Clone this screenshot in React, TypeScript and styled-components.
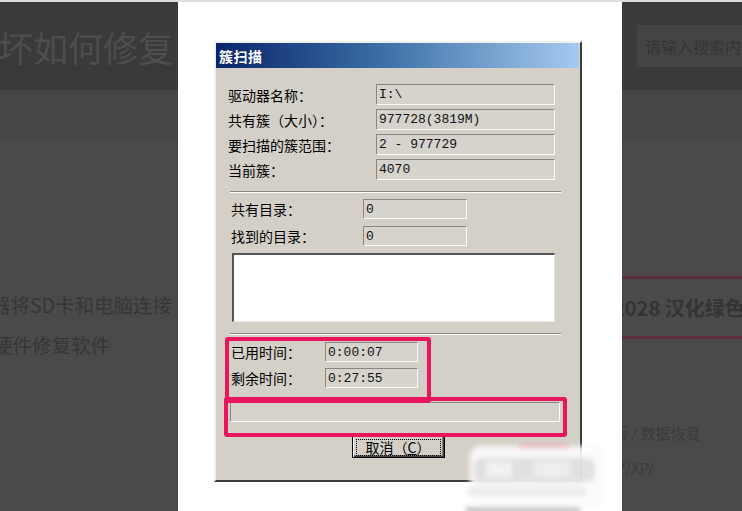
import React from "react";
import styled, { createGlobalStyle } from "styled-components";

/* ─── Page shell ─────────────────────────────────────── */
const GlobalStyle = createGlobalStyle`
  html, body { margin: 0; padding: 0; }
  body {
    width: 742px;
    height: 511px;
    overflow: hidden;
    background: #4a4a4a;
    font-family: "Noto Sans CJK SC", "Noto Sans", sans-serif;
  }
`;

const Screen = styled.div`
  width: 742px;
  height: 511px;
  display: flex;
  flex-direction: column;
  overflow: hidden;
`;

const TopStrip = styled.div`
  height: 2px;
  flex: none;
  background: #dedede;
`;

const Stage = styled.div`
  flex: 1;
  display: flex;
  min-height: 0;
`;

const SidePane = styled.div<{ $w: number }>`
  width: ${(p) => p.$w}px;
  flex: none;
  display: flex;
  flex-direction: column;
  overflow: hidden;
  background: #4a4a4a;
`;

const Header = styled.div`
  height: 88px;
  flex: none;
  display: flex;
  align-items: center;
  background: #3a3a3a;
  overflow: hidden;
`;

const NavBand = styled.div`
  height: 50px;
  flex: none;
  background: #464646;
`;

const PageTitle = styled.h1`
  margin: 0 0 0 -37px;
  font-size: 35px;
  font-weight: 400;
  color: #4d4d4d;
  white-space: nowrap;
`;

const SearchBox = styled.div`
  margin-left: 15px;
  height: 42px;
  width: 140px;
  flex: none;
  background: #444444;
  display: flex;
  align-items: center;
  padding-left: 8px;
  font-size: 16px;
  color: #343434;
  white-space: nowrap;
`;

const LeftBody = styled.div`
  padding-top: 145px;
`;

const BodyLine = styled.p<{ $shift: number }>`
  margin: 0 0 0 ${(p) => p.$shift}px;
  line-height: 40px;
  font-size: 19.5px;
  color: #363636;
  white-space: nowrap;
`;

const RightBody = styled.div`
  padding-top: 136px;
`;

const DimRule = styled.div`
  height: 3px;
  background: #5a2f3a;
`;

const CardTitle = styled.div`
  height: 57px;
  display: flex;
  align-items: center;
  margin-left: -9px;
  font-size: 20px;
  font-weight: 700;
  color: #343434;
  white-space: nowrap;
`;

const SmallLink = styled.div<{ $mt: number; $shift: number }>`
  margin: ${(p) => p.$mt}px 0 0 ${(p) => p.$shift}px;
  line-height: 35px;
  font-size: 15px;
  color: #3a3a3a;
  white-space: nowrap;
`;

/* ─── Lightbox with the Windows dialog ───────────────── */
const Modal = styled.div`
  width: 444px;
  flex: none;
  box-sizing: border-box;
  background: #ffffff;
  position: relative;
  padding: 39px 0 0 36px;
`;

const Dialog = styled.div`
  position: relative;
  width: 368px;
  height: 441px;
  box-sizing: border-box;
  border: 2px solid;
  border-color: #f0f0f0 #3c3c3c #3c3c3c #f0f0f0;
  background: #d4d0c8;
  font-family: "Noto Sans CJK SC", sans-serif;
  color: #000;
`;

const TitleBar = styled.div`
  height: 25px;
  margin-right: 1px;
  display: flex;
  align-items: center;
  padding-left: 3px;
  background: linear-gradient(90deg, #0a246a 0%, #3a6ea5 45%, #a6caf0 100%);
  color: #fff;
  font-size: 14px;
  font-weight: 700;
  letter-spacing: 0.5px;
`;

const FieldGrid = styled.div<{ $cols: string; $gap: number; $pl: number; $mt: number }>`
  display: grid;
  grid-template-columns: ${(p) => p.$cols};
  row-gap: ${(p) => p.$gap}px;
  padding-left: ${(p) => p.$pl}px;
  margin-top: ${(p) => p.$mt}px;
  align-items: center;
`;

const Label = styled.span`
  font-size: 14px;
  line-height: 20px;
  white-space: nowrap;
`;

const Field = styled.div<{ $h: number }>`
  height: ${(p) => p.$h}px;
  box-sizing: border-box;
  border-top: 1px solid #8a8782;
  border-left: 1px solid #8a8782;
  border-right: 1px solid #fafafa;
  border-bottom: 1px solid #fafafa;
  background: #d6d3cd;
  padding-left: 2px;
  display: flex;
  align-items: center;
  font-family: "Liberation Mono", "DejaVu Sans Mono", monospace;
  font-size: 13px;
  color: #111;
  white-space: nowrap;
`;

const Separator = styled.div<{ $mt: number }>`
  margin: ${(p) => p.$mt}px 0 0 14px;
  width: 331px;
  border-top: 1px solid #8a8782;
  border-bottom: 1px solid #ffffff;
`;

const ListBox = styled.div`
  margin: 7px 0 0 16px;
  width: 323px;
  height: 69px;
  box-sizing: border-box;
  background: #ffffff;
  border-top: 2px solid #555;
  border-left: 2px solid #555;
  border-right: 1px solid #e8e8e8;
  border-bottom: 1px solid #e8e8e8;
`;

const ProgressTrack = styled.div`
  margin: 14px 0 0 14px;
  width: 330px;
  height: 20px;
  box-sizing: border-box;
  background: #d6d3cd;
  border-top: 1px solid #8a8782;
  border-left: 1px solid #8a8782;
  border-right: 1px solid #fafafa;
  border-bottom: 1px solid #fafafa;
`;

const CancelButton = styled.button`
  display: block;
  margin: 13px auto 0;
  width: 93px;
  height: 23px;
  padding: 0;
  border: 1px solid #000;
  background: #d4d0c8;
  box-shadow: inset 1px 1px #ffffff, inset -1px -1px #404040, inset -2px -2px #808080;
  font-family: "Noto Sans CJK SC", sans-serif;
  font-size: 14px;
  color: #000;
`;

const FocusRing = styled.span`
  display: flex;
  align-items: center;
  justify-content: center;
  margin: 3px;
  height: 15px;
  border: 1px dotted #000;
  line-height: 15px;
  u { text-decoration: underline; }
`;

const Highlight = styled.div<{ $l: number; $t: number; $w: number; $h: number }>`
  position: absolute;
  left: ${(p) => p.$l}px;
  top: ${(p) => p.$t}px;
  width: ${(p) => p.$w}px;
  height: ${(p) => p.$h}px;
  box-sizing: border-box;
  border: 4px solid #e8175d;
  border-radius: 3px;
  pointer-events: none;
`;

const Watermark = styled.svg`
  position: absolute;
  left: 284px;
  top: 432px;
  pointer-events: none;
`;

export default function App() {
  return (
    <>
      <GlobalStyle />
      <Screen>
        <TopStrip />
        <Stage>
          <SidePane $w={178}>
            <Header>
              <PageTitle>损坏如何修复</PageTitle>
            </Header>
            <NavBand />
            <LeftBody>
              <BodyLine $shift={-9}>器将SD卡和电脑连接</BodyLine>
              <BodyLine $shift={-7}>硬件修复软件</BodyLine>
            </LeftBody>
          </SidePane>

          <Modal>
            <Dialog>
              <TitleBar>簇扫描</TitleBar>

              <FieldGrid $cols="148px 179px" $gap={4} $pl={12} $mt={16}>
                <Label>驱动器名称：</Label>
                <Field $h={21}>I:\</Field>
                <Label>共有簇（大小）：</Label>
                <Field $h={21}>977728(3819M)</Field>
                <Label>要扫描的簇范围：</Label>
                <Field $h={21}>2 - 977729</Field>
                <Label>当前簇：</Label>
                <Field $h={21}>4070</Field>
              </FieldGrid>

              <Separator $mt={11} />

              <FieldGrid $cols="132px 104px" $gap={7} $pl={15} $mt={6}>
                <Label>共有目录：</Label>
                <Field $h={20}>0</Field>
                <Label>找到的目录：</Label>
                <Field $h={20}>0</Field>
              </FieldGrid>

              <ListBox />

              <Separator $mt={11} />

              <FieldGrid $cols="94px 93px" $gap={6} $pl={15} $mt={7}>
                <Label>已用时间：</Label>
                <Field $h={20}>0:00:07</Field>
                <Label>剩余时间：</Label>
                <Field $h={20}>0:27:55</Field>
              </FieldGrid>

              <ProgressTrack />

              <CancelButton>
                <FocusRing>
                  取消（<u>C</u>）
                </FocusRing>
              </CancelButton>

              <Highlight $l={9} $t={294} $w={206} $h={66} />
              <Highlight $l={8} $t={354} $w={343} $h={40} />
            </Dialog>

            <Watermark width="150" height="79" viewBox="0 0 150 79">
              <defs>
                <filter id="wm-blur" x="-20%" y="-50%" width="140%" height="200%">
                  <feGaussianBlur stdDeviation="2.4" />
                </filter>
              </defs>
              <g filter="url(#wm-blur)">
                <rect x="8" y="12" width="135" height="60" rx="10" fill="#fbfbfb" opacity="0.92" />
                <rect x="57" y="10" width="50" height="4" rx="2" fill="#eab0bf" />
                <rect x="12" y="24" width="121" height="24" rx="8" fill="#d6d6d6" opacity="0.7" />
                <rect x="24" y="28" width="26" height="15" fill="#f3f3f3" opacity="0.85" />
                <rect x="72" y="28" width="36" height="15" fill="#f3f3f3" opacity="0.75" />
                <rect x="6" y="53" width="118" height="9" fill="#e6e6e6" opacity="0.8" />
                <rect x="4" y="73" width="114" height="6" fill="#8a8a8a" opacity="0.55" />
              </g>
            </Watermark>
          </Modal>

          <SidePane $w={120}>
            <Header>
              <SearchBox>请输入搜索内容</SearchBox>
            </Header>
            <NavBand />
            <RightBody>
              <DimRule />
              <CardTitle>2028 汉化绿色版</CardTitle>
              <DimRule />
              <SmallLink $mt={76} $shift={-9}>版 / 数据恢复</SmallLink>
              <SmallLink $mt={0} $shift={-5}>7/XP/</SmallLink>
            </RightBody>
          </SidePane>
        </Stage>
      </Screen>
    </>
  );
}
